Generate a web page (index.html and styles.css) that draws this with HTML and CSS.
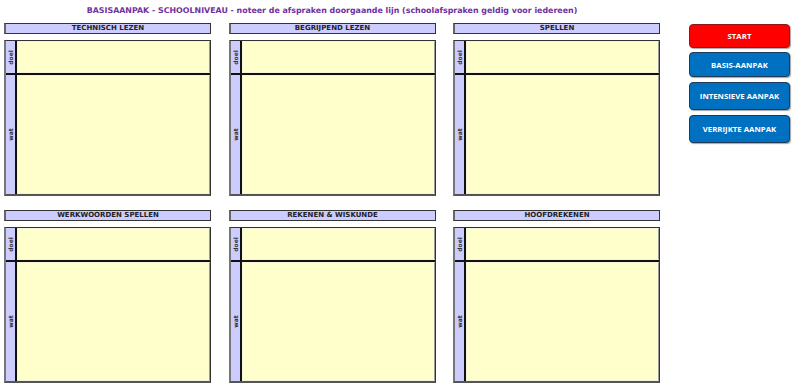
FILE: index.html
```html
<!DOCTYPE html>
<html lang="nl">
<head>
    <meta charset="UTF-8">
    <title>Basisaanpak - schoolniveau</title>
    <link rel="stylesheet" href="styles.css">
</head>
<body>
    <div class="sheet">
        <div class="main">
            <h1 class="title">BASISAANPAK - SCHOOLNIVEAU - noteer de afspraken doorgaande lijn (schoolafspraken geldig voor iedereen)</h1>

            <div class="grid">
                <section class="panel">
                    <div class="panel-head">TECHNISCH LEZEN</div>
                    <div class="panel-body">
                        <div class="row doel"><div class="tag"><span>doel</span></div><div class="field"></div></div>
                        <div class="row wat"><div class="tag"><span>wat</span></div><div class="field"></div></div>
                    </div>
                </section>
                <section class="panel">
                    <div class="panel-head">BEGRIJPEND LEZEN</div>
                    <div class="panel-body">
                        <div class="row doel"><div class="tag"><span>doel</span></div><div class="field"></div></div>
                        <div class="row wat"><div class="tag"><span>wat</span></div><div class="field"></div></div>
                    </div>
                </section>
                <section class="panel">
                    <div class="panel-head">SPELLEN</div>
                    <div class="panel-body">
                        <div class="row doel"><div class="tag"><span>doel</span></div><div class="field"></div></div>
                        <div class="row wat"><div class="tag"><span>wat</span></div><div class="field"></div></div>
                    </div>
                </section>
                <section class="panel">
                    <div class="panel-head">WERKWOORDEN SPELLEN</div>
                    <div class="panel-body">
                        <div class="row doel"><div class="tag"><span>doel</span></div><div class="field"></div></div>
                        <div class="row wat"><div class="tag"><span>wat</span></div><div class="field"></div></div>
                    </div>
                </section>
                <section class="panel">
                    <div class="panel-head">REKENEN &amp; WISKUNDE</div>
                    <div class="panel-body">
                        <div class="row doel"><div class="tag"><span>doel</span></div><div class="field"></div></div>
                        <div class="row wat"><div class="tag"><span>wat</span></div><div class="field"></div></div>
                    </div>
                </section>
                <section class="panel">
                    <div class="panel-head">HOOFDREKENEN</div>
                    <div class="panel-body">
                        <div class="row doel"><div class="tag"><span>doel</span></div><div class="field"></div></div>
                        <div class="row wat"><div class="tag"><span>wat</span></div><div class="field"></div></div>
                    </div>
                </section>
            </div>
        </div>

        <nav class="side">
            <a class="btn btn-start">START</a>
            <a class="btn btn-basis">BASIS-AANPAK</a>
            <a class="btn btn-big">INTENSIEVE AANPAK</a>
            <a class="btn btn-big">VERRIJKTE AANPAK</a>
        </nav>
    </div>
</body>
</html>
```

FILE: styles.css
```css
* {
    box-sizing: border-box;
}
body {
    margin: 0;
    background: #fff;
    font-family: "DejaVu Sans", Verdana, sans-serif;
}
.sheet {
    display: flex;
    padding-left: 4px;
}
.main {
    width: 656px;
}
.title {
    margin: 0;
    height: 23px;
    padding-top: 5px;
    font-size: 7.9px;
    line-height: 12px;
    font-weight: bold;
    color: #7030a0;
    text-align: center;
    white-space: nowrap;
}
.grid {
    display: grid;
    grid-template-columns: repeat(3, 207px);
    column-gap: 17.5px;
    row-gap: 14px;
}
.panel-head {
    height: 11px;
    margin-bottom: 6px;
    background: #ccccff;
    border: 1px solid #333;
    border-left: 2px solid #666;
    font-size: 7px;
    line-height: 9px;
    font-weight: bold;
    color: #222;
    text-align: center;
}
.panel-body {
    height: 156px;
    display: flex;
    flex-direction: column;
    border: 1px solid #333;
    border-left: 2px solid #777;
    border-bottom: 2px solid #555;
}
.row {
    display: flex;
}
.row.doel {
    height: 34px;
    border-bottom: 2px solid #111;
}
.row.wat {
    flex: 1;
}
.tag {
    width: 11px;
    flex: none;
    background: #ccccff;
    border-right: 2px solid #111;
    display: flex;
    align-items: center;
    justify-content: center;
}
.tag span {
    transform: rotate(-90deg);
    font-size: 6px;
    font-weight: bold;
    color: #333;
}
.field {
    flex: 1;
    background: #ffffcc;
    border: 1px solid #f4f4d8;
    border-right-color: #999;
}
.side {
    width: 101px;
    margin-left: 29px;
    padding-top: 24px;
    display: flex;
    flex-direction: column;
}
.btn {
    display: flex;
    align-items: center;
    justify-content: center;
    border-radius: 4px;
    border: 1px solid #1f3a5a;
    color: #fff;
    font-family: "Open Sans", "DejaVu Sans", sans-serif;
    font-size: 7.8px;
    font-weight: bold;
    box-shadow: 1px 1px 1px rgba(0, 0, 0, 0.35);
}
.btn-start {
    height: 24px;
    background: #ff0000;
    border-color: #8c1a1a;
}
.btn-basis {
    height: 25px;
    margin-top: 4px;
    background: #0070c0;
}
.btn-big {
    height: 28px;
    margin-top: 5px;
    background: #0070c0;
}
```
